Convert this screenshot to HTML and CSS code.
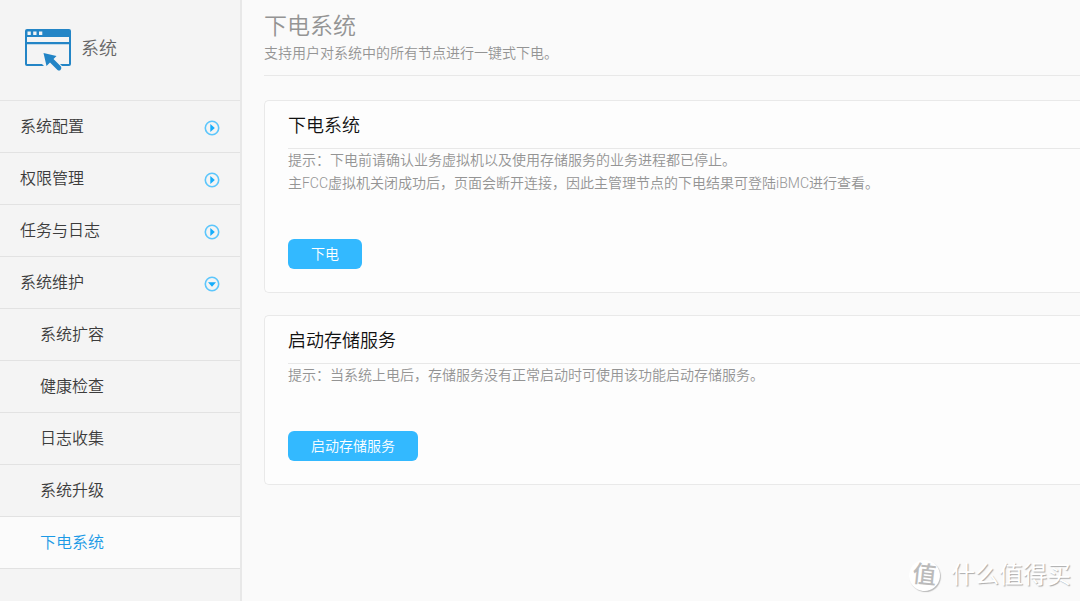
FILE: index.html
```html
<!DOCTYPE html>
<html lang="zh-CN">
<head>
<meta charset="utf-8">
<meta name="viewport" content="width=device-width, initial-scale=1">
<title>下电系统</title>
<link rel="stylesheet" href="styles.css">
</head>
<body>
<svg class="sprite" aria-hidden="true">
  <symbol id="closed" viewBox="0 0 16 16"><circle cx="8" cy="8" r="6.700" fill="none" stroke="#5cc6fc" stroke-width="1.600"/><path d="M6.300 4 10.800 8 6.300 12Z" fill="currentColor"/></symbol>
  <symbol id="open" viewBox="0 0 16 16"><circle cx="8" cy="8" r="6.700" fill="none" stroke="#5cc6fc" stroke-width="1.600"/><path d="M4 6.300h8L8 10.800Z" fill="currentColor"/></symbol>
</svg>
<div class="app">
  <aside class="sidebar">
    <div class="brand">
      <svg class="brand-icon" viewBox="0 0 46 42" aria-hidden="true">
        <path fill="#2385c6" fill-rule="evenodd" d="M2 0H44Q46 0 46 2V35Q46 37 44 37H37L35 35H44V15.300H2V35H17L19 37H2Q0 37 0 35V2Q0 0 2 0ZM2 8V13H44V8ZM2.500 2.500V6H5.800V2.500ZM8.200 2.500V6H11.500V2.500ZM14 2.500V6H17.300V2.500Z"/>
        <path fill="#2385c6" d="M18.500 24 31.500 27 28.500 30 36 37.500Q37 39 35.500 41Q34 42 32.500 41L25 33.500 21.500 37Z"/>
      </svg>
      <span>系统</span>
    </div>
    <nav>
      <ul class="menu">
        <li><button class="item" type="button" aria-expanded="false">系统配置<svg class="arrow"><use href="#closed"/></svg></button></li>
        <li><button class="item" type="button" aria-expanded="false">权限管理<svg class="arrow"><use href="#closed"/></svg></button></li>
        <li><button class="item" type="button" aria-expanded="false">任务与日志<svg class="arrow"><use href="#closed"/></svg></button></li>
        <li>
          <button class="item" type="button" aria-expanded="true">系统维护<svg class="arrow"><use href="#open"/></svg></button>
          <ul class="menu">
            <li><a class="item sub" href="#">系统扩容</a></li>
            <li><a class="item sub" href="#">健康检查</a></li>
            <li><a class="item sub" href="#">日志收集</a></li>
            <li><a class="item sub" href="#">系统升级</a></li>
            <li><a class="item sub active" href="#" aria-current="page">下电系统</a></li>
          </ul>
        </li>
      </ul>
    </nav>
  </aside>
  <main class="content">
    <header class="page-head">
      <h1>下电系统</h1>
      <p>支持用户对系统中的所有节点进行一键式下电。</p>
    </header>
    <section class="card">
      <h2>下电系统</h2>
      <p>提示：下电前请确认业务虚拟机以及使用存储服务的业务进程都已停止。</p>
      <p>主FCC虚拟机关闭成功后，页面会断开连接，因此主管理节点的下电结果可登陆iBMC进行查看。</p>
      <button class="action" type="button">下电</button>
    </section>
    <section class="card">
      <h2>启动存储服务</h2>
      <p>提示：当系统上电后，存储服务没有正常启动时可使用该功能启动存储服务。</p>
      <button class="action" type="button">启动存储服务</button>
    </section>
  </main>
</div>
<div class="watermark"><span class="seal">值</span><span>什么值得买</span></div>
</body>
</html>
```
FILE: styles.css
```css
* {
  box-sizing: border-box;
}

body {
  margin: 0;
  background: #fafafa;
  color: #949494;
  font: 350 14px/23px Roboto, "Noto Sans CJK SC", sans-serif;
}

h1, h2, p, ul {
  margin: 0;
  padding: 0;
  font-weight: inherit;
}

.sprite {
  display: none;
}

.app {
  display: flex;
  min-height: 100vh;
}

.sidebar {
  flex: 0 0 242px;
  background: #f4f4f4;
  border-right: 2px solid #e8e8e8;
}

.brand {
  display: flex;
  align-items: center;
  gap: 10px;
  height: 101px;
  padding: 0 25px 4px;
  border-bottom: 1px solid #e4e4e4;
  color: #666;
  font-size: 18px;
}

.brand-icon {
  width: 46px;
  height: 42px;
  margin-top: 4px;
}

.menu {
  list-style: none;
}

.item {
  display: flex;
  align-items: center;
  justify-content: space-between;
  width: 100%;
  height: 52px;
  padding: 0 20px 0 20px;
  background: none;
  border: 0;
  border-bottom: 1px solid #e2e2e2;
  color: #3c3c3c;
  font: inherit;
  font-size: 16px;
  text-decoration: none;
}

.sub {
  padding-left: 40px;
}

.active {
  background: #fbfbfb;
  color: #1b9ae6;
}

.arrow {
  width: 16px;
  height: 16px;
  margin-top: 2px;
  color: #16adfb;
}

.content {
  flex: 1;
  min-width: 0;
  padding: 11px 0 24px 22px;
}

.page-head {
  padding-bottom: 10px;
  margin-bottom: 24px;
  border-bottom: 1px solid #e8e8e8;
}

.page-head h1 {
  font-size: 23px;
  line-height: 31px;
}

.card {
  margin-bottom: 22px;
  padding: 0 0 23px 23px;
  background: #fdfdfd;
  border: 1px solid #e9e9e9;
  border-right: 0;
  border-radius: 5px 0 0 5px;
}

.card h2 {
  padding-top: 3px;
  border-bottom: 1px solid #e8e8e8;
  color: #111;
  font-size: 18px;
  line-height: 44px;
}

.action {
  display: block;
  height: 30px;
  margin-top: 44px;
  padding: 0 23px;
  background: #33b9ff;
  border: 0;
  border-radius: 6px;
  color: #fff;
  font: inherit;
}

.watermark {
  position: absolute;
  right: 9px;
  bottom: 10px;
  display: flex;
  align-items: center;
  gap: 11px;
  color: #fff;
  font-size: 24px;
  font-weight: 400;
  line-height: 32px;
  text-shadow: 1px 1px 1px #aaa;
}

.seal {
  width: 31px;
  height: 31px;
  border-radius: 50%;
  background: #fff;
  box-shadow: 1px 1px 1px #bbb;
  color: #bbb;
  font-weight: 500;
  line-height: 30px;
  text-align: center;
  text-shadow: none;
  transform: rotate(6deg);
}
```
